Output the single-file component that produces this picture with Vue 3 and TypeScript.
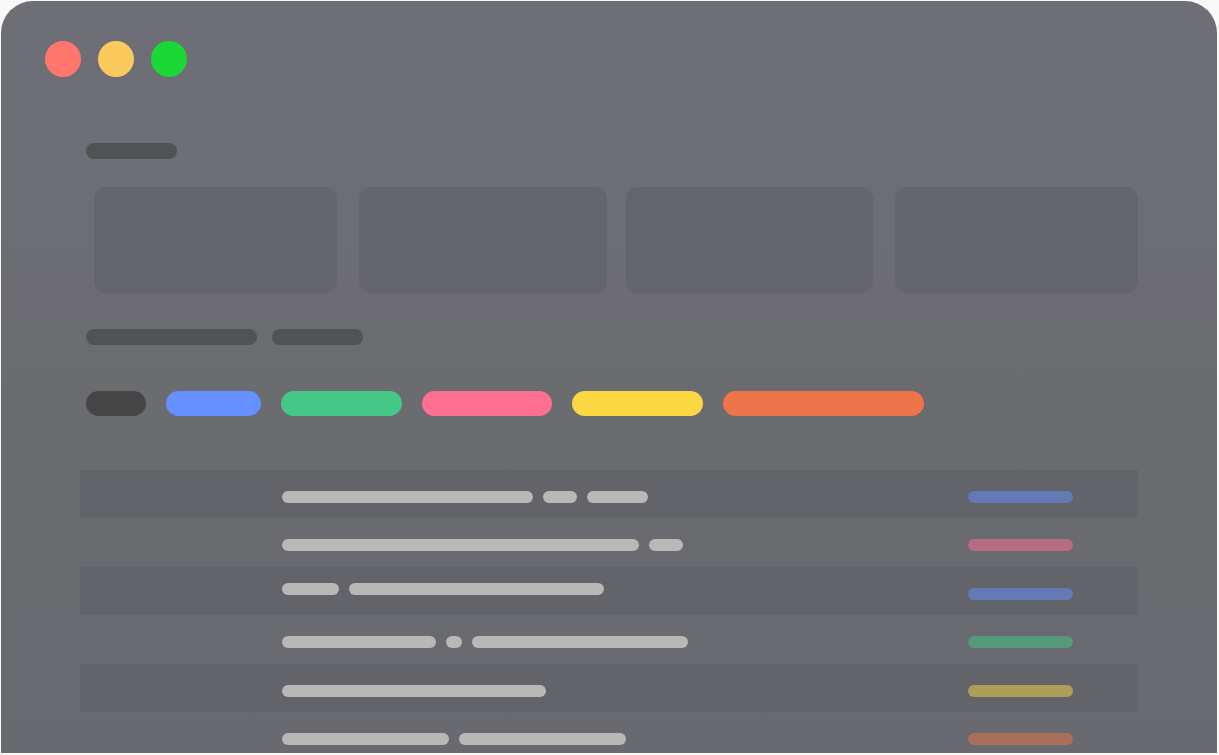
<script setup lang="ts">
interface Row {
  bars: number[]
  tag: string
  raised?: boolean
}

const lights: string[] = ['red', 'amber', 'lime']

const filters: { tone: string; width: number }[] = [
  { tone: 'dark', width: 60 },
  { tone: 'blue', width: 95 },
  { tone: 'green', width: 121 },
  { tone: 'pink', width: 130 },
  { tone: 'yellow', width: 131 },
  { tone: 'orange', width: 201 },
]

const rows: Row[] = [
  { bars: [251, 34, 61], tag: 'blue' },
  { bars: [357, 34], tag: 'pink' },
  { bars: [57, 255], tag: 'blue', raised: true },
  { bars: [154, 16, 216], tag: 'green' },
  { bars: [264], tag: 'yellow' },
  { bars: [167, 167], tag: 'orange' },
]
</script>

<template>
  <div class="backdrop">
    <main class="window">
      <header class="lights">
        <span v-for="light in lights" :key="light" class="light" :class="light"></span>
      </header>

      <div class="heading">
        <span class="title short"></span>
      </div>

      <section class="cards">
        <div class="pair">
          <div class="card"></div>
          <div class="card wide"></div>
        </div>
        <div class="pair">
          <div class="card wide"></div>
          <div class="card"></div>
        </div>
      </section>

      <div class="heading second">
        <span class="title long"></span>
        <span class="title short"></span>
      </div>

      <ul class="filters">
        <li
          v-for="filter in filters"
          :key="filter.tone"
          class="filter"
          :class="filter.tone"
          :style="{ width: filter.width + 'px' }"
        ></li>
      </ul>

      <table class="list">
        <tbody>
          <tr v-for="(row, r) in rows" :key="r">
            <td class="lead"></td>
            <td :class="{ raised: row.raised }">
              <div class="bars">
                <span
                  v-for="(width, b) in row.bars"
                  :key="b"
                  class="bar"
                  :style="{ width: width + 'px' }"
                ></span>
              </div>
            </td>
            <td class="status">
              <div class="tag" :class="row.tag"></div>
            </td>
          </tr>
        </tbody>
      </table>
    </main>
  </div>
</template>

<style>
body {
  margin: 0;
  background: #f8f8f8;
}
</style>

<style scoped>
.backdrop {
  box-sizing: border-box;
  height: 100vh;
  padding: 1px 2px 2px 1px;
  font-family: "Liberation Sans", Arial, sans-serif;
}

.window {
  box-sizing: border-box;
  height: 100%;
  padding: 40px 79px 0;
  overflow: hidden;
  border-radius: 32px 32px 0 0;
  background: linear-gradient(#6e6e76 0%, #6d6d75 30%, #6b6c70 46%, #696a6f 100%);
}

.lights {
  display: flex;
  gap: 17px;
  margin-left: -35px;
}

.light {
  width: 36px;
  height: 36px;
  border-radius: 50%;
}

.light.red {
  background: #ff776c;
}

.light.amber {
  background: #fcc95c;
}

.light.lime {
  background: #1bd836;
}

.heading {
  display: flex;
  gap: 15px;
  margin: 66px 0 0 6px;
}

.heading.second {
  margin-top: 36px;
}

.title {
  height: 16px;
  border-radius: 8px;
  background: #515254;
}

.title.short {
  width: 91px;
}

.title.long {
  width: 171px;
}

.cards {
  display: flex;
  gap: 19px;
  margin: 28px 0 0 14px;
}

.pair {
  display: flex;
  flex: 1;
  gap: 22px;
}

.card {
  flex: 243;
  height: 106px;
  border-radius: 12px;
  background: #64646b;
}

.card.wide {
  flex: 247;
}

.filters {
  display: flex;
  gap: 20px;
  margin: 46px 0 54px 6px;
  padding: 0;
  list-style: none;
}

.filter {
  height: 25px;
  border-radius: 13px;
}

.filter.dark {
  background: #464646;
}

.filter.blue {
  background: #6690ff;
}

.filter.green {
  background: #44c787;
}

.filter.pink {
  background: #ff6f91;
}

.filter.yellow {
  background: #fbd743;
}

.filter.orange {
  background: #ee7549;
}

.list {
  width: 100%;
  border-collapse: collapse;
  table-layout: fixed;
}

.list tr {
  height: 49px;
}

.list tr:nth-child(odd) {
  height: 48px;
  background: #63636a;
}

.list td {
  padding: 21px 0 0;
  vertical-align: top;
}

.list td.raised {
  padding-top: 16px;
}

.list td.lead {
  width: 202px;
}

.list td.status {
  width: 170px;
}

.bars {
  display: flex;
  gap: 10px;
}

.bar {
  height: 12px;
  border-radius: 6px;
  background: #b8b8b7;
}

.tag {
  width: 105px;
  height: 12px;
  border-radius: 6px;
}

.tag.blue {
  background: #637ab4;
}

.tag.pink {
  background: #b66d82;
}

.tag.green {
  background: #56997b;
}

.tag.yellow {
  background: #ad9e58;
}

.tag.orange {
  background: #aa6f5b;
}
</style>
